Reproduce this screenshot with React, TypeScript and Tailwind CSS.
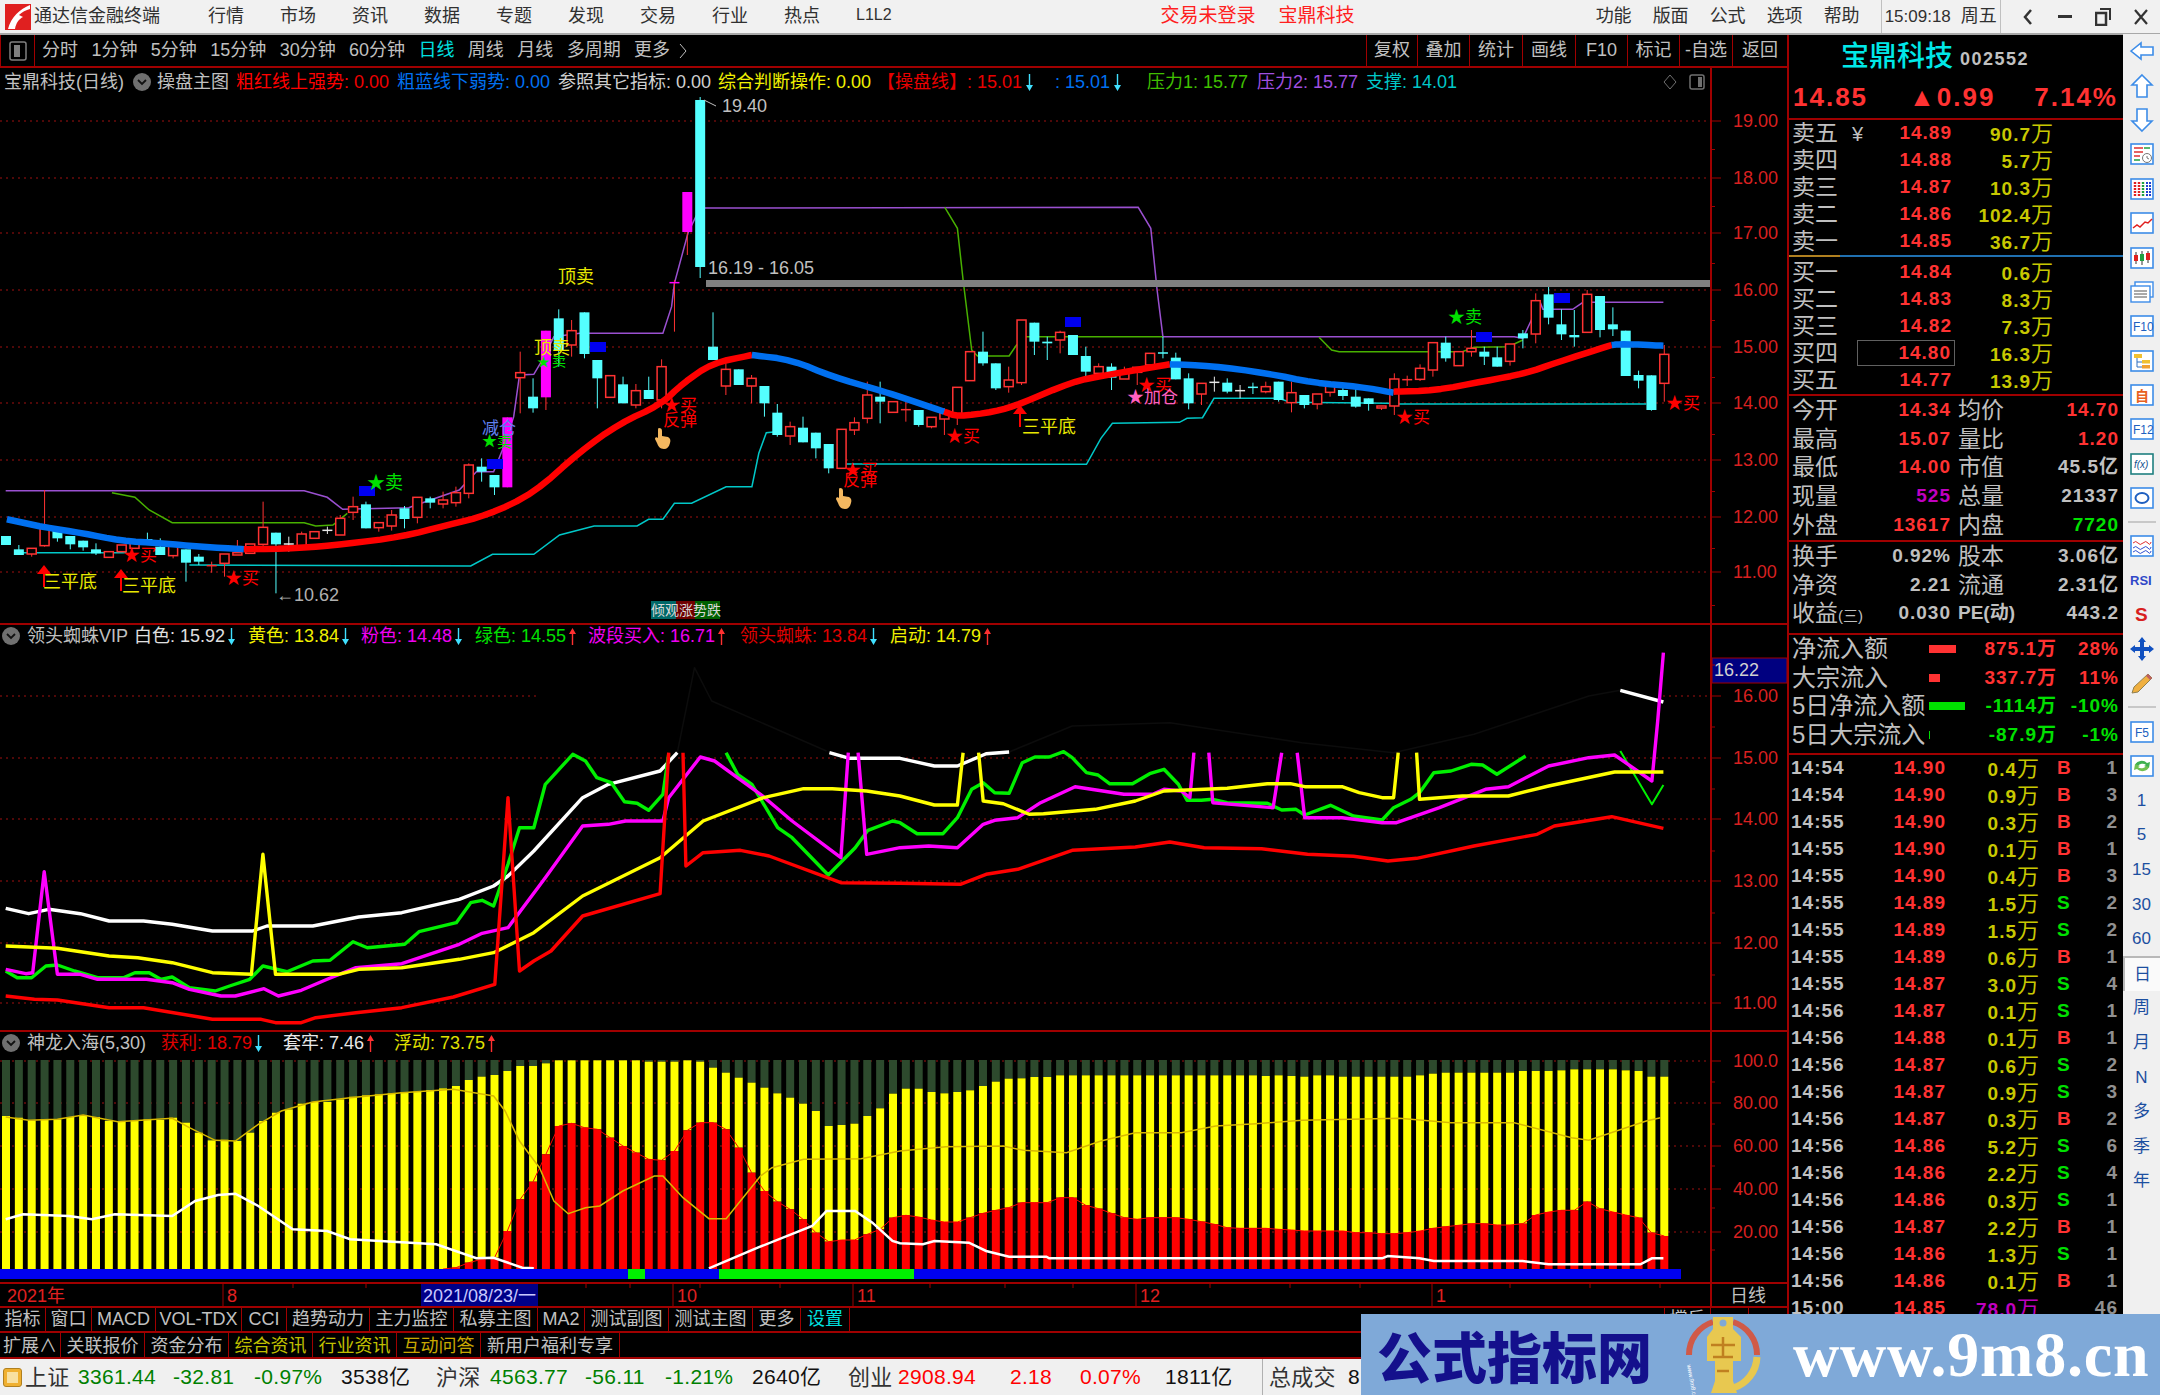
import React from "react";

const K = 900 / 1568;
const PX = (i: number) => 6 + 12.855 * i;

// coordinates below were read off 3x crops: x0 + d*K, y0 + e/3
const pts = (x0: number, y0: number, raw: number[]) => {
  const out: string[] = [];
  for (let i = 0; i < raw.length; i += 2) out.push(`${(x0 + raw[i] * K).toFixed(1)},${(y0 + raw[i + 1] / 3).toFixed(1)}`);
  return out.join(" ");
};

// corner cutting, the moving average line is a smooth curve
const smooth = (p: string, rounds = 2) => {
  let a = p.split(" ").map((s) => s.split(",").map(Number));
  for (let r = 0; r < rounds; r++) {
    const n: number[][] = [a[0]];
    for (let i = 0; i < a.length - 1; i++) {
      n.push([a[i][0] * 0.75 + a[i + 1][0] * 0.25, a[i][1] * 0.75 + a[i + 1][1] * 0.25]);
      n.push([a[i][0] * 0.25 + a[i + 1][0] * 0.75, a[i][1] * 0.25 + a[i + 1][1] * 0.75]);
    }
    n.push(a[a.length - 1]);
    a = n;
  }
  return a.map(([x, y]) => `${x.toFixed(1)},${y.toFixed(1)}`).join(" ");
};

type Candle = [string, number, number, number, number];

const CANDLES_A: Candle[] = [
  ["c",768,795,768,795],["c",808,825,795,825],["r",805,822,805,830],["r",745,797,630,800],["c",745,775,745,785],
  ["c",768,793,768,808],["c",782,802,782,812],["c",808,820,790,825],["r",815,832,815,832],["r",795,815,795,815],
  ["r",782,805,782,805],["c",777,793,758,793],["c",800,825,775,825],["r",797,827,785,835],["c",808,848,808,905],
  ["c",830,845,822,855],["r",857,859,845,878],["r",822,850,822,890],["r",818,825,780,825],["r",792,820,792,820],
  ["r",742,793,665,800],["c",758,793,758,940],["w",792,794,770,815],["r",762,797,755,797],["r",755,775,755,775],
  ["w",751,753,740,762],["r",715,765,705,765],["r",680,697,650,720],["c",673,745,665,745],["r",728,743,728,755],
  ["r",705,738,690,752],["c",685,717,678,745],["r",652,712,652,730],["c",655,668,650,685],["r",660,672,635,685],
  ["r",638,668,620,680],["r",555,640,550,655],["c",560,575,535,605],["c",585,622,585,645],["m",412,622,412,622],
  ["r",278,293,215,400],["c",350,385,295,398],["m",152,352,152,390],["c",115,210,88,260],["r",152,195,120,230],
  ["c",97,222,97,235],["c",240,295,240,385],["r",287,352,287,352],["c",313,370,290,370],["r",332,375,312,385],
  ["c",330,357,290,357],["r",260,360,238,385],["m",8,10,0,155],["m",-264,-144,-264,-75],["c",-540,-39,-549,-6],
  ["c",200,240,97,240],["r",268,318,240,345],["c",268,315,268,315],["r",295,318,285,370],["c",318,370,318,410],
  ["c",398,465,372,470],["r",440,468,425,495],["c",443,487,410,487],["c",458,505,458,535],["c",492,565,492,580],
  ["r",448,565,448,565],["r",428,450,412,465],["r",345,415,305,430],["c",350,365,305,430],["r",365,397,365,397],
];
const CANDLES_B: Candle[] = [
  ["r",629,631,600,665],["c",630,675,630,680],["r",652,680,652,685],["r",640,657,625,705],["r",562,645,562,675],
  ["r",455,542,455,542],["c",455,490,395,497],["c",490,565,490,570],["r",540,560,500,578],["r",360,548,360,555],
  ["c",368,425,368,465],["c",425,430,410,480],["r",397,420,392,460],["c",405,465,405,465],["c",468,515,440,528],
  ["r",500,520,490,535],["c",500,533,490,570],["r",513,537,500,537],["r",502,517,502,555],["r",460,495,460,510],
  ["c",459,461,410,475],["c",473,538,458,538],["c",535,610,520,628],["r",550,582,550,615],["w",547,549,530,575],
  ["c",548,575,535,580],["w",572,574,555,595],["c",562,564,548,582],["r",560,575,545,580],["c",545,600,545,605],
  ["r",578,608,545,637],["c",585,615,585,625],["r",582,612,582,628],["r",555,577,548,590],["c",570,588,548,600],
  ["c",590,620,558,623],["c",595,612,595,632],["r",618,624,618,630],["r",537,618,520,645],["r",539,541,527,558],
  ["r",505,538,493,543],["r",428,510,428,530],["c",428,475,410,485],["r",455,497,455,497],["r",445,455,390,470],
  ["c",455,470,440,495],["c",472,500,440,500],["r",432,484,432,497],["c",400,415,390,445],["r",302,402,280,430],
  ["c",283,353,258,373],["c",373,403,328,420],["c",405,412,330,440],["r",283,397,270,397],["c",288,390,288,412],
  ["c",373,388,322,408],["c",392,528,392,528],["c",525,542,512,565],["c",526,630,526,632],["r",463,550,435,605],
];

const YELLOW = [255,260,268,265,265,258,252,258,270,272,270,265,267,260,275,305,328,326,330,305,270,245,235,218,213,213,205,197,193,190,187,183,182,177,172,165,147,137,132,120,105,105,97,88,88,88,88,88,88,88,92,92,92,88,92,110,125,140,155,170,187,200,218,240,285,282,278,255,232,188,173,173,183,187,183,178,165,152,143,142,138,138,133,133,133,133,133,133,133,133,133,133,133,133,133,133,133,133,135,133,135,137,133,133,137,137,137,137,137,137,133,128,125,125,125,125,125,125,120,120,120,118,115,115,115,115,118,120,137,137];
const RED = [...Array(35).fill(714),710,695,685,680,600,505,452,370,285,277,290,295,320,345,365,385,388,360,298,275,275,295,350,425,480,512,535,565,605,632,627,627,610,595,560,553,558,567,573,573,560,547,538,530,515,515,515,500,500,523,533,547,560,565,560,560,560,565,572,580,590,592,592,592,595,597,600,600,600,600,605,605,608,608,605,600,592,587,583,578,578,582,582,578,552,543,538,538,512,533,543,552,560,605,615];

const P1_GRID = [121, 178, 233, 290, 347, 403, 460, 517, 572];
const P1_LABELS = ["19.00", "18.00", "17.00", "16.00", "15.00", "14.00", "13.00", "12.00", "11.00"];
const P2_GRID = [695, 757, 818, 880, 942, 1002];
const P2_LABELS = ["16.00", "15.00", "14.00", "13.00", "12.00", "11.00"];
const P3_GRID = [1060, 1102, 1145, 1188, 1231];
const P3_LABELS = ["100.0", "80.00", "60.00", "40.00", "20.00"];

function Axis({ grid, labels, top, bottom }: { grid: number[]; labels: string[]; top: number; bottom: number }) {
  const step = grid[1] - grid[0];
  const minors: number[] = [];
  for (let y = grid[0] - step / 2; y < bottom; y += step) if (y > top + 30) minors.push(y);
  return (
    <g>
      <line x1={1711} x2={1711} y1={top} y2={bottom} stroke="#a00000" strokeWidth={2} />
      {minors.map((y) => <line key={y} x1={1711} x2={1715} y1={y} y2={y} stroke="#a00000" />)}
      {grid.map((y, i) => (
        <g key={y}>
          <line x1={1711} x2={1721} y1={y} y2={y} stroke="#a00000" />
          <text x={1733} y={y + 6} fontSize={18} fill="#d82020">{labels[i]}</text>
        </g>
      ))}
    </g>
  );
}

function Grid({ ys, x1 = 0, x2 = 1711 }: { ys: number[]; x1?: number; x2?: number }) {
  return <g>{ys.map((y) => <line key={y} x1={x1} x2={x2} y1={y} y2={y} stroke="#a01010" strokeDasharray="2 4" />)}</g>;
}

function CandleMark({ i, c, y0 }: { i: number; c: Candle; y0: number }) {
  const [kind, t, b, hi, lo] = c;
  const x = PX(i);
  const top = y0 + t / 3, bot = y0 + b / 3, h = y0 + hi / 3, l = y0 + lo / 3;
  const col = kind === "r" ? "#ff3232" : kind === "c" ? "#54ffff" : kind === "m" ? "#ff00ff" : "#e8e8e8";
  const thin = bot - top < 1.5;
  const wick = kind === "m" ? "#ff3232" : col;
  return (
    <g>
      <line x1={x} x2={x} y1={h} y2={l} stroke={wick} strokeWidth={1} />
      {thin ? (
        <line x1={x - 5} x2={x + 5} y1={top} y2={top} stroke={col} strokeWidth={1.5} />
      ) : kind === "r" ? (
        <rect x={x - 4.5} y={top} width={9} height={bot - top} fill="#000" stroke={col} strokeWidth={1.5} />
      ) : (
        <rect x={x - 5} y={top} width={10} height={bot - top} fill={col} />
      )}
    </g>
  );
}

function Hand({ x, y }: { x: number; y: number }) {
  return (
    <g transform={`translate(${x} ${y})`}>
      <path d="M1 0c2 0 3 1 3 3v5l6 1c2 1 3 3 2 6-1 4-3 6-6 6-4 0-6-3-7-6l-2-4c0-2 2-2 3-1l0-7c0-2 0-3 1-3z" fill="#f4b860" />
    </g>
  );
}

function UpArrow({ x, y }: { x: number; y: number }) {
  return (
    <g>
      <polygon points={`${x},${y} ${x + 7},${y + 9} ${x - 7},${y + 9}`} fill="#ff0000" />
      <line x1={x} x2={x} y1={y + 8} y2={y + 22} stroke="#ff0000" strokeWidth={2} />
    </g>
  );
}

const SIGNALS: [number, number, string, string, number][] = [
  [558, 283, "顶卖", "#e8e800", 18],
  [534, 354, "顶卖", "#e8e800", 18],
  [537, 366, "★", "#00e000", 13],
  [552, 366, "卖", "#00e000", 14],
  [367, 489, "★卖", "#00e000", 18],
  [482, 434, "减仓", "#6080f0", 17],
  [482, 446, "★", "#00e000", 15],
  [497, 447, "卖", "#00e000", 15],
  [43, 588, "三平底", "#e8e800", 18],
  [122, 592, "三平底", "#e8e800", 18],
  [1022, 433, "三平底", "#e8e800", 18],
  [123, 561, "★买", "#ff0000", 17],
  [225, 584, "★买", "#ff0000", 17],
  [663, 411, "★买", "#ff0000", 17],
  [663, 426, "反弹", "#ff0000", 17],
  [844, 476, "★买", "#ff0000", 17],
  [843, 486, "反弹", "#ff0000", 17],
  [946, 442, "★买", "#ff0000", 17],
  [1138, 391, "★买", "#ff0000", 17],
  [1127, 403, "★加仓", "#ff60c0", 17],
  [1396, 423, "★买", "#ff0000", 17],
  [1666, 409, "★买", "#ff0000", 17],
  [1448, 323, "★卖", "#00e000", 17],
];

const BLUE_BOXES = [[359, 486], [487, 459], [590, 342], [1065, 317], [1476, 332], [1554, 293]];

function MainPlot() {
  const z7 = (a: number[]) => pts(0, 280, a);
  const z8 = (a: number[]) => pts(900, 200, a);
  const Ma = ({ c, p }: { c: string; p: string }) => <polyline fill="none" stroke={c} strokeWidth={6.5} strokeLinejoin="round" points={smooth(p)} />;
  return (
    <svg width={1787} height={555} viewBox="0 68 1787 555" className="block font-['Liberation_Sans','Noto_Sans_CJK_SC',sans-serif]">
      <Grid ys={P1_GRID} />
      <polyline fill="none" stroke="#9a50d0" strokeWidth={1.5} points={`${z7([10,632,530,632,570,652,597,688,712,683,720,678,800,630,830,575,860,575,880,490,895,410,905,285,930,283,945,240,965,170,1010,160,1155,160,1170,80,1175,10])} 688,233 700,208 ${z8([415,22,437,85,448,270,458,410,1070,410,1085,415,1100,360,1115,305,1120,328,1172,328,1190,307,1330,307])}`} />
      <polyline fill="none" stroke="#48b000" strokeWidth={1.5} points={z7([195,638,235,652,260,690,300,728,530,728,550,738,580,735,605,700])} />
      <polyline fill="none" stroke="#48b000" strokeWidth={1.5} points={z8([78,22,100,85,110,240,125,450,135,468,190,468,203,435,220,410,458,410])} />
      <polyline fill="none" stroke="#48b000" strokeWidth={1.5} points={z8([730,412,752,450,765,455,980,455,1000,442,1060,440,1085,420])} />
      <polyline fill="none" stroke="#00c8c8" strokeWidth={1.5} points={z7([30,818,220,818])} />
      <polyline fill="none" stroke="#00c8c8" strokeWidth={1.5} points={z7([330,855,820,858,858,823,930,823,975,765,1035,738,1110,738,1130,718,1155,718,1175,670,1205,670,1265,620,1310,620,1322,520,1335,458,1352,455])} />
      <polyline fill="none" stroke="#00c8c8" strokeWidth={1.5} points={`${z7([1475,552,1568,552])} ${z8([325,793,350,715,370,670,487,667,500,655,527,653,547,595,660,595,680,607,850,610,870,612,1300,612])}`} />

      {CANDLES_A.map((c, i) => <CandleMark key={i} i={i} c={c} y0={280} />)}
      {CANDLES_B.map((c, i) => <CandleMark key={i} i={i + 70} c={c} y0={200} />)}

      <Ma c="#0070f0" p={z7([12,718,77,742,145,760,210,782,280,790,350,800,425,808])} />
      <Ma c="#ff0000" p={z7([425,808,520,805,600,793,700,770,780,735,850,705,930,640,1010,515,1080,430,1150,375,1190,310,1240,250,1310,225])} />
      <Ma c="#0070f0" p={`${z7([1310,225,1380,240,1450,290,1530,330,1568,350])} ${z8([77,635])}`} />
      <Ma c="#ff0000" p={z8([77,635,100,650,165,635,210,612,300,545,360,525,470,493])} />
      <Ma c="#0070f0" p={z8([470,493,540,497,640,520,720,548,800,560,860,578])} />
      <Ma c="#ff0000" p={z8([860,575,930,572,1020,543,1090,520,1140,490,1240,435])} />
      <Ma c="#0070f0" p={z8([1240,435,1260,432,1330,437])} />

      <rect x={706} y={280} width={1005} height={7} fill="#808080" />
      {BLUE_BOXES.map(([x, y]) => <rect key={x} x={x} y={y} width={16} height={10} fill="#0000f0" />)}

      <UpArrow x={44} y={565} />
      <UpArrow x={121} y={569} />
      <UpArrow x={1020} y={405} />
      <Hand x={658} y={428} />
      <Hand x={839} y={488} />

      {SIGNALS.map(([x, y, t, c, s], i) => <text key={i} x={x} y={y} fontSize={s} fill={c}>{t}</text>)}

      <path d="M704 100 l12 6" stroke="#c0c0c0" fill="none" />
      <text x={722} y={112} fontSize={18} fill="#c0c0c0">19.40</text>
      <text x={708} y={274} fontSize={18} fill="#c0c0c0">16.19 - 16.05</text>
      <text x={276} y={601} fontSize={18} fill="#b0b0b0">←10.62</text>

      <rect x={651} y={601} width={25} height={18} fill="#006868" />
      <rect x={676} y={601} width={19} height={18} fill="#700000" />
      <rect x={695} y={601} width={25} height={18} fill="#006000" />
      <text x={651} y={615} fontSize={14} fill="#d8d8d8">倾观涨势跌</text>

      <Axis grid={P1_GRID} labels={P1_LABELS} top={68} bottom={623} />
    </svg>
  );
}

function SpiderPlot() {
  const z9 = (a: number[]) => pts(0, 620, a);
  const z10 = (a: number[]) => pts(900, 620, a);
  const L = ({ c, p, w = 3.4 }: { c: string; p: string; w?: number }) => <polyline fill="none" stroke={c} strokeWidth={w} strokeLinejoin="round" points={p} />;
  return (
    <svg width={1787} height={407} viewBox="0 623 1787 407" className="block -mt-[1px] font-['Liberation_Sans',sans-serif]">
      <Grid ys={[695]} x1={0} x2={538} />
      <Grid ys={[695]} x1={1663} />
      <Grid ys={P2_GRID.slice(1)} />
      <L c="#0c0c0c" w={1.5} p={z9([1180,395,1210,140,1240,240,1440,390])} />
      <L c="#0c0c0c" w={1.5} p={z10([190,393,300,315,470,305,700,365,860,395,1000,340,1200,225,1255,208])} />
      <L c="#ffffff" p={z9([10,862,50,878,85,865,140,878,190,900,250,900,300,910,370,930,440,930,465,915,545,915,625,888,700,875,800,835,860,795,885,765,930,690,1015,530,1060,490,1150,450,1180,395])} />
      <L c="#ffffff" p={`${z9([1445,395,1480,412,1568,412])} ${z10([60,435,100,435,150,398,190,393])}`} />
      <L c="#ffffff" p={z10([1255,208,1330,243])} />
      <L c="#00f000" p={z9([10,1050,30,1070,55,1070,80,1035,100,1032,130,1050,170,1070,215,1070,235,1055,260,1055,280,1075,300,1068,330,1100,375,1110,400,1095,435,1075,458,1035,500,1052,545,1020,575,1018,615,962,640,980,705,970,730,932,795,905,820,845,840,838,860,855,885,730,905,620,930,620,950,490,998,400,1020,420,1040,470,1065,485,1088,542,1110,547,1130,568,1155,520,1165,400])} />
      <L c="#00f000" p={`${z9([1265,395,1285,460,1310,490,1355,620,1380,650,1443,762,1490,680,1512,628,1555,600])} ${z10([0,605,30,638,75,638,100,590,125,505,145,485,165,515,190,517,213,425,235,408,260,408,285,392,300,410,325,455,345,462,365,488,405,488,435,458,460,445,485,490,500,538,525,538,545,535,570,545,640,547,665,567,690,565,705,582,750,553,790,585,840,597,860,560,890,535,905,515,930,455,960,450,995,430,1015,432,1040,460,1090,405])}`} />
      <L c="#00f000" w={2} p={z10([1255,390,1310,550,1330,492])} />
      <L c="#ff00ff" p={`${z9([10,1045,45,1058,57,1055,77,752,100,1060,140,1060,170,1075,255,1075,300,1085,330,1105,385,1125,410,1125,460,1103,485,1125,525,1108,570,1075,620,1040,700,1028,800,970,840,937,885,920,950,770,1015,615,1060,610,1090,600,1155,600,1165,530,1220,408,1245,420,1325,520,1380,600,1465,710,1478,395])}`} />
      <L c="#ff00ff" p={`${z9([1495,395,1510,700,1568,680])} ${z10([50,675,100,680,145,610,165,598,205,590,245,545,305,497,390,520,440,520,460,505,490,510,505,530,512,395])}`} />
      <L c="#ff00ff" p={z10([538,395,545,545,650,560,665,395])} />
      <L c="#ff00ff" p={z10([692,395,705,590,770,590,840,605,865,605,940,560,1020,505,1060,497,1130,435,1200,410,1245,402,1310,480,1320,300,1330,95])} />
      <L c="#ffff00" p={`${z9([10,975,100,982,190,1005,240,1010,300,1025,370,1055,438,1060,458,700,480,1060,590,1060,625,1045,700,1040,800,1015,860,995,930,935,1015,825,1150,710,1225,600,1330,530,1400,503,1450,503,1510,510,1568,525])} ${z10([60,552,100,552,110,395])}`} />
      <L c="#ffff00" p={z10([137,395,145,540,180,548,225,580,250,578,340,565,410,540,460,510,570,502,640,488,680,488,705,497,770,497,800,515,840,530,860,530,868,395])} />
      <L c="#ffff00" p={z10([900,395,905,535,980,525,1060,525,1130,495,1245,453,1330,453])} />
      <L c="#ff0000" p={z9([10,1125,60,1135,100,1137,190,1160,250,1160,370,1195,455,1195,480,1205,525,1205,550,1190,620,1175,700,1160,790,1128,862,1090,885,530,905,1050,930,1020,960,990,1015,885,1150,818,1165,395])} />
      <L c="#ff0000" p={`${z9([1190,395,1195,735,1225,695,1290,688,1340,705,1465,785,1568,787])} ${z10([105,790,150,760,205,745,300,688,410,678,470,663,530,680,630,683,710,700,790,706,850,720,900,712,1000,675,1110,640,1140,615,1240,587,1330,622])}`} />
      <rect x={1712} y={657} width={75} height={25} fill="#000080" stroke="#a00000" strokeWidth={1} />
      <text x={1714} y={675} fontSize={18} fill="#d0d0d0">16.22</text>
      <Axis grid={P2_GRID} labels={P2_LABELS} top={623} bottom={1030} />
    </svg>
  );
}

function DragonPlot() {
  const z11 = (a: number[]) => pts(0, 1030, a);
  const z12 = (a: number[]) => pts(900, 1030, a);
  const Y = (d: number) => 1030 + d / 3;
  return (
    <svg width={1787} height={252} viewBox="0 1030 1787 252" className="block -mt-[1px] font-['Liberation_Sans',sans-serif]">
      <Grid ys={P3_GRID} />
      {YELLOW.map((v, i) => {
        const x = PX(i) - 4;
        const ty = Y(v), ry = Y(RED[i]);
        return (
          <g key={i}>
            <rect x={x} y={1059} width={8} height={ty - 1059} fill="#2d4a2d" />
            <rect x={x} y={ty} width={8} height={ry - ty} fill="#ffff00" />
            <rect x={x} y={ry} width={8} height={1268 - ry} fill="#ff0000" />
          </g>
        );
      })}
      <polyline fill="none" stroke="#ff0000" strokeWidth={1} points={RED.map((v, i) => `${PX(i).toFixed(1)},${Y(v).toFixed(1)}`).slice(34).join(" ")} />
      <polyline fill="none" stroke="#d8b800" strokeWidth={1.5} points={`${z11([10,258,50,268,100,265,145,252,205,272,300,262,330,290,375,328,410,330,450,280,490,240,545,213,610,200,700,185,790,175,860,195,880,240,905,330,940,410,965,510,990,548,1020,530,1045,525,1085,480,1140,435,1155,435,1190,500,1235,563,1265,563,1290,510,1325,435,1345,410,1400,385,1500,383,1568,360])} ${z12([80,347,180,345,215,358,290,365,350,330,410,305,490,305,550,285,620,278,700,268,870,262,960,275,1070,275,1170,320,1200,328,1300,270,1325,260])}`} />
      <polyline fill="none" stroke="#ffffff" strokeWidth={2.5} points={z11([10,565,40,550,120,555,160,565,200,550,300,555,340,510,380,492,410,488,450,525,510,595,570,600,610,625,760,640,830,682,860,680,910,710,930,712])} />
      <polyline fill="none" stroke="#ffffff" strokeWidth={2.5} points={`${z11([1235,712,1320,650,1415,585,1440,540,1490,540,1520,575,1555,630,1568,637])} ${z12([40,640,60,630,120,635,150,660,190,677,255,677,260,682,840,682,850,675,905,682,930,690,1085,690,1130,700,1290,700,1310,682,1330,682])}`} />
      <rect x={0} y={1268} width={1681} height={10} fill="#0000f0" />
      <rect x={628} y={1268} width={17} height={10} fill="#00f000" />
      <rect x={719} y={1268} width={195} height={10} fill="#00f000" />
      <Axis grid={P3_GRID} labels={P3_LABELS} top={1030} bottom={1282} />
    </svg>
  );
}

function DateRow() {
  const ticks = [293, 366, 447, 520, 586, 630, 700, 780, 930, 1005, 1073, 1210, 1290, 1360, 1510, 1590, 1660];
  const months: [number, string][] = [[223, "8"], [673, "10"], [853, "11"], [1136, "12"], [1432, "1"]];
  return (
    <svg width={1787} height={24} viewBox="0 1282 1787 24" className="block -mt-[1px] font-['Liberation_Sans','Noto_Sans_CJK_SC',sans-serif]">
      {ticks.map((x) => <line key={x} x1={x} x2={x} y1={1283} y2={1287} stroke="#a00000" />)}
      <text x={7} y={1301} fontSize={18} fill="#e02020">2021年</text>
      {months.map(([x, t]) => (
        <g key={t}>
          <line x1={x} x2={x} y1={1282} y2={1306} stroke="#a00000" />
          <text x={x + 4} y={1301} fontSize={18} fill="#e02020">{t}</text>
        </g>
      ))}
      <rect x={421} y={1283} width={117} height={22} fill="#000088" />
      <text x={423} y={1301} fontSize={18} fill="#c8c8ff">2021/08/23/一</text>
      <line x1={1711} x2={1711} y1={1282} y2={1306} stroke="#a00000" strokeWidth={2} />
      <text x={1730} y={1301} fontSize={18} fill="#c0c0c0">日线</text>
    </svg>
  );
}

function Chevron({ className = "" }: { className?: string }) {
  return (
    <div className={`w-[18px] h-[18px] rounded-full bg-[#707070] flex items-center justify-center shrink-0 ${className}`}>
      <svg width="10" height="8" viewBox="0 0 10 8"><path d="M1 2l4 4 4-4" stroke="#111" strokeWidth="1.8" fill="none" /></svg>
    </div>
  );
}

function Arrow({ up, className }: { up?: boolean; className: string }) {
  return (
    <svg width="9" height="17" viewBox="0 0 9 17" className={`inline-block shrink-0 ${className}`}>
      {up ? (
        <path d="M4.5 0L8 6H5.2V17H3.8V6H1z" fill="currentColor" />
      ) : (
        <path d="M4.5 17L8 11H5.2V0H3.8V11H1z" fill="currentColor" />
      )}
    </svg>
  );
}

function Legend() {
  return (
    <div className="absolute left-0 top-0 w-[1711px] h-[28px] flex items-center pl-[4px] text-[18px] whitespace-nowrap">
      <span className="w-[129px] text-[#c0c0c0]">宝鼎科技(日线)</span>
      <Chevron className="mr-[6px]" />
      <span className="w-[79px] text-[#c0c0c0]">操盘主图</span>
      <span className="w-[161px] text-[#ff0000]">粗红线上强势: <span className="text-[#ee0000]">0.00</span></span>
      <span className="w-[161px] text-[#0070f0]">粗蓝线下弱势: 0.00</span>
      <span className="w-[160px] text-[#d0d0d0]">参照其它指标: 0.00</span>
      <span className="w-[159px] text-[#f0f000]">综合判断操作: 0.00</span>
      <span className="w-[178px] text-[#e80000] flex items-center gap-[1px]">【操盘线】: 15.01<Arrow className="text-[#40e0ff] ml-[2px]" /></span>
      <span className="w-[92px] text-[#0070f0] flex items-center gap-[1px]">: 15.01<Arrow className="text-[#40e0ff] ml-[2px]" /></span>
      <span className="w-[110px] text-[#40c000]">压力1: 15.77</span>
      <span className="w-[109px] text-[#a050e0]">压力2: 15.77</span>
      <span className="text-[#00c8c8]">支撑: 14.01</span>
      <div className="ml-auto flex items-center gap-[12px] pr-[6px]">
        <svg width="14" height="16" viewBox="0 0 14 16"><path d="M7 1l6 7-6 7-6-7z" stroke="#707070" fill="none" /></svg>
        <svg width="16" height="16" viewBox="0 0 16 16"><rect x="1" y="1" width="14" height="14" rx="2" stroke="#707070" strokeWidth="1.5" fill="none" /><rect x="9" y="3" width="4" height="10" fill="#707070" /></svg>
      </div>
    </div>
  );
}

function SpiderLegend() {
  return (
    <div className="absolute left-0 top-0 w-[1711px] h-[22px] flex items-center pl-[2px] text-[18px] whitespace-nowrap">
      <Chevron className="mr-[7px]" />
      <span className="w-[107px] text-[#c0c0c0]">领头蜘蛛VIP</span>
      <span className="w-[114px] flex items-center text-[#e0e0e0]">白色: 15.92<Arrow className="text-[#40e0ff] ml-[2px]" /></span>
      <span className="w-[113px] flex items-center text-[#f0f000]">黄色: 13.84<Arrow className="text-[#40e0ff] ml-[2px]" /></span>
      <span className="w-[114px] flex items-center text-[#f000f0]">粉色: 14.48<Arrow className="text-[#40e0ff] ml-[2px]" /></span>
      <span className="w-[113px] flex items-center text-[#00e000]">绿色: 14.55<Arrow up className="text-[#ff3030] ml-[2px]" /></span>
      <span className="w-[152px] flex items-center text-[#f000f0]">波段买入: 16.71<Arrow up className="text-[#ff3030] ml-[2px]" /></span>
      <span className="w-[150px] flex items-center text-[#e00000]">领头蜘蛛: 13.84<Arrow className="text-[#40e0ff] ml-[2px]" /></span>
      <span className="flex items-center text-[#f0f000]">启动: 14.79<Arrow up className="text-[#ff3030] ml-[2px]" /></span>
    </div>
  );
}

function DragonLegend() {
  return (
    <div className="absolute left-0 top-0 w-[1711px] h-[22px] flex items-center pl-[2px] text-[18px] whitespace-nowrap">
      <Chevron className="mr-[7px]" />
      <span className="w-[134px] text-[#c0c0c0]">神龙入海(5,30)</span>
      <span className="w-[122px] flex items-center text-[#e00000]">获利: 18.79<Arrow className="text-[#40e0ff] ml-[2px]" /></span>
      <span className="w-[111px] flex items-center text-[#e8e8e8]">套牢: 7.46<Arrow up className="text-[#ff3030] ml-[2px]" /></span>
      <span className="flex items-center text-[#e0e000]">浮动: 73.75<Arrow up className="text-[#ff3030] ml-[2px]" /></span>
    </div>
  );
}

const TOOL_ITEMS = ["分时", "1分钟", "5分钟", "15分钟", "30分钟", "60分钟", "日线", "周线", "月线", "多周期", "更多"];
const TOOL_RIGHT = [["复权", 51], ["叠加", 52], ["统计", 53], ["画线", 53], ["F10", 52], ["标记", 52], ["-自选", 53], ["返回", 55]] as const;

function Toolbar() {
  return (
    <div className="h-[33px] flex items-center border-b-2 border-[#a00000] text-[18px] text-[#c0c0c0] whitespace-nowrap">
      <div className="w-[35px] h-full border-l border-r border-[#a00000] flex items-center justify-center">
        <svg width="18" height="20" viewBox="0 0 18 20"><rect x="1" y="1" width="16" height="18" rx="2" stroke="#808080" strokeWidth="1.5" fill="none" /><rect x="5" y="4" width="6" height="12" fill="#808080" /></svg>
      </div>
      <div className="flex items-center gap-[13.4px] ml-[7px]">
        {TOOL_ITEMS.map((t) => <span key={t} className={t === "日线" ? "text-[#00e0e0]" : ""}>{t}</span>)}
        <svg width="10" height="16" viewBox="0 0 10 16" className="-ml-[5px]"><path d="M2 1l6 7-6 7" stroke="#c0c0c0" fill="none" /></svg>
      </div>
      <div className="ml-auto flex h-full">
        {TOOL_RIGHT.map(([t, w]) => (
          <div key={t} className={`border-l border-[#a00000] flex items-center justify-center ${w === 51 ? "w-[51px]" : w === 52 ? "w-[52px]" : w === 53 ? "w-[53px]" : "w-[55px]"}`}>{t}</div>
        ))}
      </div>
    </div>
  );
}

const BTN1 = [["指标", "w-[46px]"], ["窗口", "w-[46px]"], ["MACD", "w-[64px]"], ["VOL-TDX", "w-[86px]"], ["CCI", "w-[45px]"], ["趋势动力", "w-[83px]"], ["主力监控", "w-[84px]"], ["私募主图", "w-[84px]"], ["MA2", "w-[47px]"], ["测试副图", "w-[84px]"], ["测试主图", "w-[84px]"], ["更多", "w-[48px]"], ["设置", "w-[49px] text-[#00e0e0]"]];
const BTN2 = [["扩展∧", "w-[61px]"], ["关联报价", "w-[84px]"], ["资金分布", "w-[84px]"], ["综合资讯", "w-[84px] text-[#c0c000]"], ["行业资讯", "w-[84px] text-[#c0c000]"], ["互动问答", "w-[84px] text-[#c8a800]"], ["新用户福利专享", "w-[139px]"]];

function ButtonRows() {
  return (
    <div className="text-[18px] text-[#c0c0c0] whitespace-nowrap">
      <div className="h-[25px] flex border-t-2 border-[#a00000]">
        {BTN1.map(([t, c]) => <div key={t} className={`${c} h-full border-r border-[#a00000] flex items-center justify-center`}>{t}</div>)}
        <div className="ml-auto w-[123px] h-full flex">
          <div className="w-[47px] border-l border-r border-[#a00000] flex items-center justify-center">撑斥</div>
          <div className="w-[38px] border-r border-[#a00000]" />
        </div>
      </div>
      <div className="h-[28px] flex border-t-2 border-b-2 border-[#a00000]">
        {BTN2.map(([t, c]) => <div key={t} className={`${c} h-full border-r border-[#a00000] flex items-center justify-center pt-[2px]`}>{t}</div>)}
      </div>
    </div>
  );
}

const SELL = [["卖五", "14.89", "90.7"], ["卖四", "14.88", "5.7"], ["卖三", "14.87", "10.3"], ["卖二", "14.86", "102.4"], ["卖一", "14.85", "36.7"]];
const BUY = [["买一", "14.84", "0.6"], ["买二", "14.83", "8.3"], ["买三", "14.82", "7.3"], ["买四", "14.80", "16.3"], ["买五", "14.77", "13.9"]];
const STATS = [
  ["今开", "14.34", "text-[#ff3232]", "均价", "14.70", "text-[#ff3232]"],
  ["最高", "15.07", "text-[#ff3232]", "量比", "1.20", "text-[#ff3232]"],
  ["最低", "14.00", "text-[#ff3232]", "市值", "45.5亿", "text-[#c0c0c0]"],
  ["现量", "525", "text-[#c000c0]", "总量", "21337", "text-[#c0c0c0]"],
  ["外盘", "13617", "text-[#ff3232]", "内盘", "7720", "text-[#00e000]"],
];
const STATS2 = [
  ["换手", "0.92%", "股本", "3.06亿"],
  ["净资", "2.21", "流通", "2.31亿"],
  ["收益", "0.030", "PE(动)", "443.2"],
];
const FLOW = [
  ["净流入额", "w-[27px] h-[8px] bg-[#ff3232]", "875.1万", "28%", "text-[#ff3232]"],
  ["大宗流入", "w-[11px] h-[8px] bg-[#ff3232]", "337.7万", "11%", "text-[#ff3232]"],
  ["5日净流入额", "w-[36px] h-[8px] bg-[#00e000]", "-1114万", "-10%", "text-[#00e000]"],
  ["5日大宗流入", "w-[1px] h-[8px] bg-[#00e000]", "-87.9万", "-1%", "text-[#00e000]"],
];
const TICKS = [
  ["14:54","14.90","0.4","B","1"],["14:54","14.90","0.9","B","3"],["14:55","14.90","0.3","B","2"],["14:55","14.90","0.1","B","1"],["14:55","14.90","0.4","B","3"],
  ["14:55","14.89","1.5","S","2"],["14:55","14.89","1.5","S","2"],["14:55","14.89","0.6","B","1"],["14:55","14.87","3.0","S","4"],["14:56","14.87","0.1","S","1"],
  ["14:56","14.88","0.1","B","1"],["14:56","14.87","0.6","S","2"],["14:56","14.87","0.9","S","3"],["14:56","14.87","0.3","B","2"],["14:56","14.86","5.2","S","6"],
  ["14:56","14.86","2.2","S","4"],["14:56","14.86","0.3","S","1"],["14:56","14.87","2.2","B","1"],["14:56","14.86","1.3","S","1"],["14:56","14.86","0.1","B","1"],
  ["15:00","14.85","78.0","","46"],
];

const NUM = "font-bold text-[19px] tracking-[1px]";

function Quote({ label, price, vol, boxed }: { label: string; price: string; vol: string; boxed?: boolean }) {
  return (
    <div className="h-[26.9px] flex items-center">
      <span className="w-[65px] text-[23px] text-[#c0c0c0] whitespace-nowrap">{label}{label === "卖五" && <span className="ml-[14px] text-[20px]">¥</span>}</span>
      <span className={`w-[98px] h-[26px] pr-[3px] flex items-center justify-end ${NUM} text-[#ff3232] ${boxed ? "border border-[#606060]" : ""}`}>{price}</span>
      <span className={`w-[98px] text-right ${NUM} text-[#c8c800]`}>{vol}<span className="font-normal text-[22px] tracking-normal">万</span></span>
    </div>
  );
}

function QuotePanel() {
  return (
    <div className="w-[336px] shrink-0 border-l-2 border-[#a00000] overflow-hidden font-['Liberation_Sans','Noto_Sans_CJK_SC',sans-serif]">
      <div className="h-[41px] flex items-center pl-[52px] pt-[2px]">
        <span className="text-[28px] font-medium text-[#00e8e8] leading-none">宝鼎科技</span>
        <span className="ml-[7px] mt-[6px] text-[18px] font-bold tracking-[1.5px] text-[#c0c0c0]">002552</span>
      </div>
      <div className="h-[44px] flex items-center justify-between pl-[4px] pr-[5px] border-b-2 border-[#a00000] text-[#ff3232] font-bold text-[26px] tracking-[2px]">
        <span>14.85</span>
        <span className="ml-[2px]">▲0.99</span>
        <span>7.14%</span>
      </div>
      <div className="h-[135px] pl-[3px]">
        {SELL.map(([l, p, v]) => <Quote key={l} label={l} price={p} vol={v} />)}
      </div>
      <div className="h-[2px] bg-[#2070b0]"><div className="w-[51px] h-full bg-[#b08020]" /></div>
      <div className="h-[139px] pt-[2px] pl-[3px] border-b-2 border-[#a00000]">
        {BUY.map(([l, p, v]) => <Quote key={l} label={l} price={p} vol={v} boxed={l === "买四"} />)}
      </div>
      <div className="h-[146px] pl-[3px] pr-[4px] border-b-2 border-[#a00000]">
        {STATS.map(([a, b, bc, c, d, dc]) => (
          <div key={a} className="h-[28.7px] flex items-center">
            <span className="w-[65px] text-[23px] text-[#c0c0c0]">{a}</span>
            <span className={`w-[94px] text-right ${NUM} ${bc}`}>{b}</span>
            <span className="ml-[7px] w-[50px] text-[23px] text-[#c0c0c0]">{c}</span>
            <span className={`flex-1 text-right ${NUM} ${dc}`}>{d}</span>
          </div>
        ))}
      </div>
      <div className="h-[93px] pl-[3px] pr-[4px] border-b-2 border-[#a00000]">
        {STATS2.map(([a, b, c, d]) => (
          <div key={a} className="h-[28.7px] flex items-center">
            <span className="w-[65px] text-[23px] text-[#c0c0c0] whitespace-nowrap">{a}{a === "收益" && <span className="text-[15px]">(三)</span>}</span>
            <span className={`w-[94px] text-right ${NUM} text-[#c0c0c0]`}>{b}</span>
            <span className={`ml-[7px] w-[50px] text-[#c0c0c0] whitespace-nowrap ${c === "PE(动)" ? "text-[19px] font-bold" : "text-[23px]"}`}>{c}</span>
            <span className={`flex-1 text-right ${NUM} text-[#c0c0c0]`}>{d}</span>
          </div>
        ))}
      </div>
      <div className="h-[120px] pl-[3px] pr-[4px] border-b-2 border-[#a00000]">
        {FLOW.map(([a, bar, v, p, c]) => (
          <div key={a} className="h-[28.6px] flex items-center">
            <span className="w-[137px] text-[24px] text-[#c0c0c0] whitespace-nowrap">{a}</span>
            <span className="w-[40px] flex items-center"><span className={bar} /></span>
            <span className={`w-[88px] text-right whitespace-nowrap ${NUM} ${c}`}>{v}</span>
            <span className={`flex-1 text-right ${NUM} ${c}`}>{p}</span>
          </div>
        ))}
      </div>
      <div>
        {TICKS.map((t, i) => (
          <div key={i} className={`h-[27px] flex items-center pl-[2px] ${NUM}`}>
            <span className="w-[60px] text-[#c0c0c0]">{t[0]}</span>
            <span className="w-[95px] text-right text-[#ff3232]">{t[1]}</span>
            <span className={`w-[93px] text-right ${t[3] === "" ? "text-[#c000c0]" : "text-[#c8c800]"}`}>{t[2]}<span className="font-normal text-[22px] tracking-normal">万</span></span>
            <span className={`w-[16px] ml-[18px] ${t[3] === "B" ? "text-[#ff3232]" : "text-[#00e000]"}`}>{t[3]}</span>
            <span className="w-[45px] text-right text-[#909090]">{t[4]}</span>
          </div>
        ))}
      </div>
    </div>
  );
}

const Frame = ({ children, stroke = "#3c8ce8" }: { children?: React.ReactNode; stroke?: string }) => (
  <svg width="26" height="26" viewBox="0 0 26 26">
    <rect x="2" y="3" width="22" height="20" fill="#fff" stroke={stroke} strokeWidth="1.6" />
    {children}
  </svg>
);
const Bare = ({ children }: { children: React.ReactNode }) => <svg width="26" height="26" viewBox="0 0 26 26">{children}</svg>;
const ITXT = "Liberation Sans";

const SIDE_TOP: React.ReactNode[] = [
  <Bare><path d="M2 13L12 5V9H24V17H12V21Z" fill="#fff" stroke="#3c8ce8" strokeWidth="1.6" /></Bare>,
  <Bare><path d="M13 2L23 12H18V24H8V12H3Z" fill="#fff" stroke="#3c8ce8" strokeWidth="1.6" /></Bare>,
  <Bare><path d="M13 24L23 14H18V2H8V14H3Z" fill="#fff" stroke="#3c8ce8" strokeWidth="1.6" /></Bare>,
  <Frame><path d="M5 7h9M5 11h9M5 15h6" stroke="#e03030" strokeWidth="1.6" /><path d="M15 7h6M5 19h6" stroke="#20a040" strokeWidth="1.6" /><circle cx="18" cy="17" r="4.5" fill="#fff" stroke="#777" /><path d="M18 15v2l2 1" stroke="#777" fill="none" /></Frame>,
  <Frame><path d="M6 6v14M10 6v14" stroke="#e02020" strokeWidth="2.4" strokeDasharray="2 1" /><path d="M14 6v14" stroke="#20a040" strokeWidth="2.4" strokeDasharray="2 1" /><path d="M18 6v14M21 6v14" stroke="#2040d0" strokeWidth="2" strokeDasharray="2 1" /></Frame>,
  <Frame><path d="M4 18l4-3 3 2 5-5 3 1 4-4" stroke="#e02020" strokeWidth="1.5" fill="none" /></Frame>,
  <Frame><path d="M7 7v12M13 6v14M19 6v12" stroke="#333" /><rect x="5" y="10" width="4" height="6" fill="#e02020" /><rect x="11" y="9" width="4" height="7" fill="#20a040" /><rect x="17" y="8" width="4" height="7" fill="#e02020" /></Frame>,
  <Bare><rect x="6" y="3" width="18" height="15" fill="#fff" stroke="#3c8ce8" strokeWidth="1.4" /><rect x="2" y="7" width="19" height="16" fill="#fff" stroke="#3c8ce8" strokeWidth="1.4" /><path d="M5 12h13M5 15h13M5 18h13" stroke="#555" /></Bare>,
  <Frame><text x="4" y="18" fontSize="12" fill="#2060c0" fontFamily={ITXT}>F10</text></Frame>,
  <Frame><rect x="5" y="6" width="8" height="4" fill="#f0c030" /><path d="M8 10v9h5M8 14h5" stroke="#3070c0" fill="none" /><rect x="13" y="12" width="8" height="3.5" fill="#f0c030" /><rect x="13" y="17" width="8" height="3.5" fill="#f0a030" /></Frame>,
  <Frame><text x="6" y="19" fontSize="14" fill="#e86020" fontWeight="700" fontFamily="Noto Sans CJK SC">自</text></Frame>,
  <Frame><text x="4" y="18" fontSize="12" fill="#2060c0" fontFamily={ITXT}>F12</text></Frame>,
  <Frame stroke="#208080"><text x="5" y="17" fontSize="10" fill="#105090" fontStyle="italic" fontFamily={ITXT}>f(x)</text></Frame>,
  <Frame><ellipse cx="13" cy="13" rx="6.5" ry="5" fill="none" stroke="#2060c0" strokeWidth="2" /></Frame>,
];
const SIDE_MID: React.ReactNode[] = [
  <Frame><path d="M4 10q3-3 5 0t5 0 5 0 3-1" stroke="#e03030" fill="none" /><path d="M4 15q3-3 5 0t5 0 5 0 3-1" stroke="#3050d0" fill="none" /><path d="M4 19q3-3 5 0t5 0 5 0 3-1" stroke="#3050d0" fill="none" /></Frame>,
  <Bare><text x="1" y="18" fontSize="13" fontWeight="700" fill="#3048c8" fontFamily={ITXT}>RSI</text></Bare>,
  <Bare><text x="6" y="20" fontSize="19" fontWeight="700" fill="#d82020" fontFamily={ITXT}>S</text></Bare>,
  <Bare><path d="M13 1l4 5h-2v5h5v-2l5 4-5 4v-2h-5v5h2l-4 5-4-5h2v-5H6v2l-5-4 5-4v2h5V6H9z" fill="#1050c0" /></Bare>,
  <Bare><path d="M5 17L19 4l4 4L9 22l-6 1z" fill="#f0b040" stroke="#908050" /><path d="M19 4l4 4-2 2-4-4z" fill="#c06060" /></Bare>,
];
const SIDE_LOW: React.ReactNode[] = [
  <Frame><text x="6" y="18" fontSize="12" fill="#2060c0" fontFamily={ITXT}>F5</text></Frame>,
  <Frame><path d="M6 12a7 6 0 0 1 12-2l3-1-1 6-5-2 2-1a5 4 0 0 0-8 1z" fill="#40b050" /><path d="M20 14a7 6 0 0 1-12 2l-3 1 1-6 5 2-2 1a5 4 0 0 0 8-1z" fill="#70c050" /></Frame>,
];
const PERIODS = ["1", "5", "15", "30", "60", "日", "周", "月", "N", "多", "季", "年"];

function Sidebar() {
  return (
    <div className="w-[37px] shrink-0 -mt-[1px] bg-[#f0f0f0] flex flex-col items-center">
      {SIDE_TOP.map((ic, i) => <div key={i} className="h-[34.4px] flex items-center justify-center">{ic}</div>)}
      <div className="h-[13px] w-[28px] flex items-center"><div className="w-full border-t-2 border-[#c8c8c8]" /></div>
      {SIDE_MID.map((ic, i) => <div key={i} className="h-[34.4px] flex items-center justify-center">{ic}</div>)}
      <div className="h-[14px] w-[28px] flex items-center"><div className="w-full border-t-2 border-[#c8c8c8]" /></div>
      {SIDE_LOW.map((ic, i) => <div key={i} className="h-[34.4px] flex items-center justify-center">{ic}</div>)}
      {PERIODS.map((p) => (
        <div key={p} className={`h-[34.6px] w-full flex items-center justify-center text-[17px] text-[#1c4fa0] ${p === "日" ? "border-t-2 border-l-2 border-[#b8b8b8] bg-[#fafafa]" : ""}`}>{p}</div>
      ))}
    </div>
  );
}

function TitleBar() {
  return (
    <div className="h-[35px] shrink-0 flex items-center bg-[#f1f1f1] border-b-2 border-[#a8a8a8] text-[18px] text-[#303030] whitespace-nowrap">
      <svg width="26" height="26" viewBox="0 0 26 26" className="ml-[5px] shrink-0">
        <rect width="26" height="26" fill="#e02020" />
        <path d="M25 1C15 5 6 13 3 25L10 25C11 19 14 15 18 13L14 11C17 8 21 6 25 5Z" fill="#fff" />
      </svg>
      <span className="ml-[3px] w-[128px]">通达信金融终端</span>
      <div className="ml-[46px] flex gap-[36px]">
        {["行情", "市场", "资讯", "数据", "专题", "发现", "交易", "行业", "热点"].map((t) => <span key={t}>{t}</span>)}
        <span className="text-[16px]">L1L2</span>
      </div>
      <span className="ml-[269px] text-[19px] text-[#ff2020]">交易未登录</span>
      <span className="ml-[23px] text-[19px] text-[#ff2020]">宝鼎科技</span>
      <div className="ml-[241px] flex gap-[21px]">
        {["功能", "版面", "公式", "选项", "帮助"].map((t) => <span key={t}>{t}</span>)}
      </div>
      <div className="ml-[21px] h-full flex items-center border-l border-r border-[#c0c0c0] px-[3px] gap-[10px]">
        <span className="text-[17px]">15:09:18</span>
        <span>周五</span>
      </div>
      <div className="flex-1 flex items-center justify-around pl-[10px] text-[#333]">
        <svg width="12" height="18" viewBox="0 0 12 18"><path d="M9 2L3 9l6 7" stroke="#333" strokeWidth="2.5" fill="none" /></svg>
        <svg width="14" height="4" viewBox="0 0 14 4"><rect width="14" height="3" fill="#333" /></svg>
        <svg width="16" height="18" viewBox="0 0 16 18"><rect x="1" y="5" width="10" height="12" fill="none" stroke="#333" strokeWidth="2.5" /><path d="M5 1h10v11" fill="none" stroke="#333" strokeWidth="2" /></svg>
        <svg width="14" height="16" viewBox="0 0 14 16"><path d="M1 1l12 14M13 1L1 15" stroke="#333" strokeWidth="2.2" /></svg>
      </div>
    </div>
  );
}

const STATUS = [
  ["上证", "w-[53px]", "text-[#333] text-[22px]"],
  ["3361.44", "w-[95px]", "text-[#008000]"],
  ["-32.81", "w-[81px]", "text-[#008000]"],
  ["-0.97%", "w-[87px]", "text-[#008000]"],
  ["3538亿", "w-[95px]", "text-[#111]"],
  ["沪深", "w-[54px]", "text-[#333] text-[22px]"],
  ["4563.77", "w-[95px]", "text-[#008000]"],
  ["-56.11", "w-[80px]", "text-[#008000]"],
  ["-1.21%", "w-[87px]", "text-[#008000]"],
  ["2640亿", "w-[96px]", "text-[#111]"],
  ["创业", "w-[50px]", "text-[#333] text-[22px]"],
  ["2908.94", "w-[112px]", "text-[#ff0000]"],
  ["2.18", "w-[70px]", "text-[#ff0000]"],
  ["0.07%", "w-[85px]", "text-[#ff0000]"],
  ["1811亿", "w-[97px]", "text-[#111]"],
];

function StatusBar() {
  return (
    <div className="h-[36px] shrink-0 bg-[#f0f0f0] flex items-center text-[21px] tracking-[0.3px] whitespace-nowrap">
      <div className="ml-[3px] mr-[3px] w-[19px] h-[19px] rounded-[3px] bg-[#f0b030] border border-[#b08020] flex items-center justify-center">
        <div className="w-[11px] h-[11px] bg-[#f8e0a0]" />
      </div>
      {STATUS.map(([t, w, c]) => <span key={t} className={`${w} ${c}`}>{t}</span>)}
      <div className="h-full border-l border-[#b0b0b0] pl-[6px] flex items-center">
        <span className="text-[22px] text-[#333]">总成交</span>
        <span className="ml-[12px] text-[#111]">8</span>
      </div>
    </div>
  );
}

function Watermark() {
  return (
    <div className="absolute right-0 bottom-0 w-[799px] h-[81px] bg-[#7fa9d8] flex items-center font-['Noto_Sans_CJK_SC',sans-serif]">
      <span className="ml-[16px] w-[300px] text-[55px] font-black leading-none text-[#14108c] whitespace-nowrap">公式指标网</span>
      <svg width="80" height="80" viewBox="0 0 80 80" className="ml-[6px] shrink-0">
        <path d="M6 40A34 34 0 0 1 30 7" fill="none" stroke="#d05a48" strokeWidth="6" />
        <path d="M50 7A34 34 0 0 1 74 40" fill="none" stroke="#d05a48" strokeWidth="6" />
        <path d="M74 42A34 34 0 0 1 50 73" fill="none" stroke="#e8c850" strokeWidth="7" />
        <path d="M30 2h20v12l8 8v24h-8v20l4 12H28l4-12V46h-8V22l6-8z" fill="#e8c850" />
        <circle cx="40" cy="8" r="3.5" fill="#7fa9d8" />
        <path d="M28 30h24M40 22v20M30 42h20M34 56h12" stroke="#c08020" strokeWidth="2.5" />
        <text x="4" y="50" fontSize="6" fill="#fff" transform="rotate(80 4 50)" fontFamily="Liberation Sans">www.9m8.cn</text>
      </svg>
      <span className="ml-[30px] text-[64px] font-bold leading-none text-white font-['Liberation_Serif',serif] tracking-[0.8px] whitespace-nowrap">www.9m8.cn</span>
    </div>
  );
}

export default function App() {
  return (
    <div className="relative w-[2160px] h-[1395px] overflow-hidden bg-black flex flex-col font-['Liberation_Sans','Noto_Sans_CJK_SC',sans-serif]">
      <TitleBar />
      <div className="flex flex-1 min-h-0">
        <div className="w-[1787px] shrink-0 flex flex-col">
          <Toolbar />
          <div className="relative h-[555px] overflow-hidden">
            <MainPlot />
            <Legend />
          </div>
          <div className="relative h-[407px] overflow-hidden border-t-2 border-[#a00000]">
            <SpiderPlot />
            <SpiderLegend />
          </div>
          <div className="relative h-[252px] overflow-hidden border-t-2 border-[#a00000]">
            <DragonPlot />
            <DragonLegend />
          </div>
          <div className="h-[24px] border-t-2 border-[#a00000] overflow-hidden">
            <DateRow />
          </div>
          <ButtonRows />
        </div>
        <QuotePanel />
        <Sidebar />
      </div>
      <StatusBar />
      <Watermark />
    </div>
  );
}
